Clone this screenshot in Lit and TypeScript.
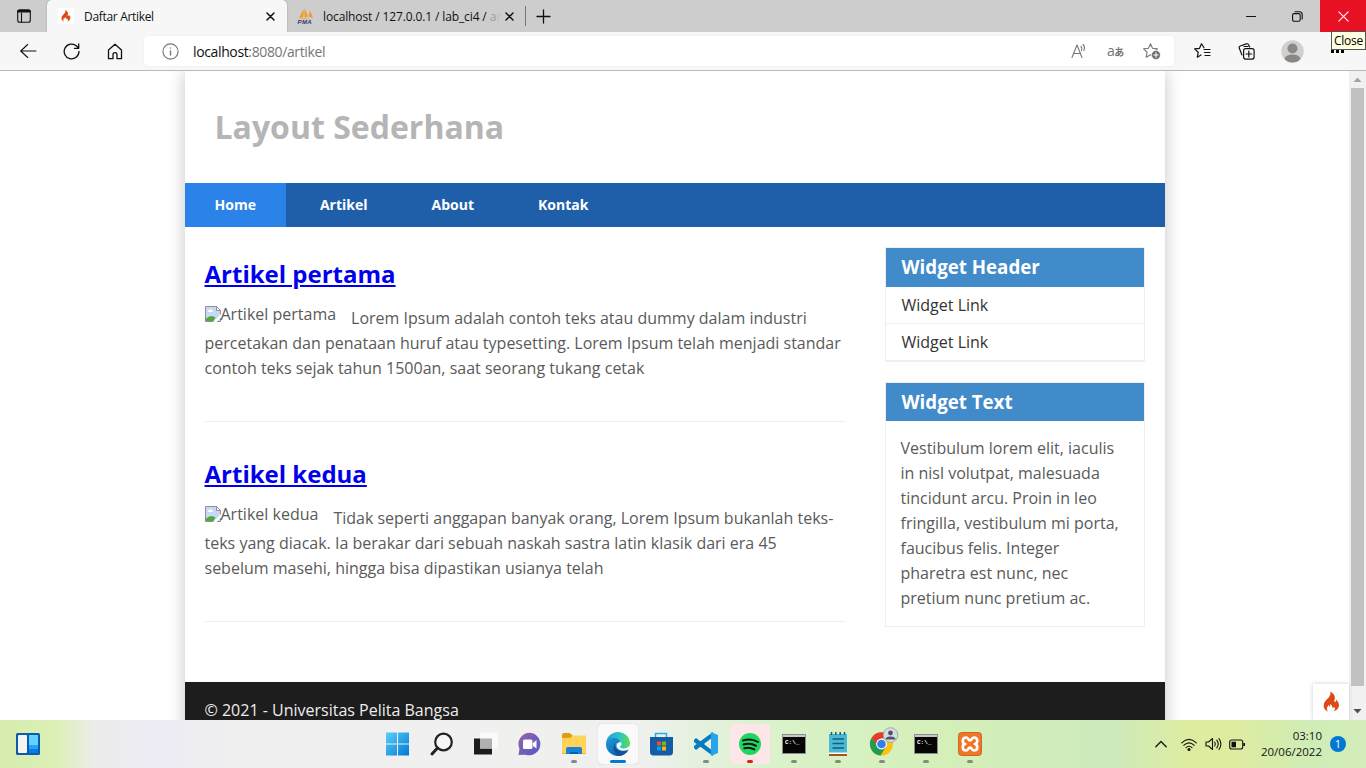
import { LitElement, html, css, svg } from "lit";
import { customElement } from "lit/decorators.js";

const flame = html`<svg viewBox="0 0 18 22" width="100%" height="100%"><path fill="#dd4814" d="M7.6 0c1 3-.3 4.900-2 6.800C3.500 9 .7 11.400.7 14.900c0 3 1.900 5.200 4.800 6.100-1.600-1.300-2-3.200-.9-4.800.4-.7 1.100-1.200 1.200-2.100.8.4 1.100 1.200.9 2.100.9-.5 1.200-2 .8-3.200 2.700 1.300 1.700 3.300 2.800 4 .7.400 1.400-.1 1.200-1.200 1.900 2 1.200 4.100-.6 5.200 3.300-.8 6-3.200 6-6.500 0-2.900-1.700-4.300-2.900-6.100-.4.9.2 1.900-.6 2.400-.8.400-1.500-.2-1.500-1.100 0-1.300 1.100-2.100.6-4.100C12 3 10 1.300 7.600 0Z"/></svg>`;

const ico = (w: number, h: number, body: unknown) =>
  html`<svg width=${w} height=${h} viewBox="0 0 ${w} ${h}" fill="none" stroke="currentColor" stroke-width="1.100" stroke-linecap="round" stroke-linejoin="round">${body}</svg>`;

const closeX = ico(9, 9, svg`<path stroke-width="1.500" d="M1 1l7 7M8 1L1 8"/>`);
const star = "M7.500 .8l2 4.500 4.900.600-3.600 3.400.900 4.900-4.200-2.500-4.300 2.500.900-4.900L.6 5.900l4.900-.6Z";

@customElement("browser-chrome")
class BrowserChrome extends LitElement {
  static styles = css`
    :host { display: block; height: 71px; font-family: "Open Sans", sans-serif; font-size: 12px; color: #111; }
    svg { display: block; flex: none; }
    .tabs { display: flex; height: 32px; background: #cdcdcd; }
    .menu { width: 47px; box-sizing: border-box; padding: 9px 0 0 17px; }
    .tab { display: flex; align-items: center; height: 32px; box-sizing: border-box; letter-spacing: -0.32px; white-space: nowrap; }
    .active { width: 240px; background: #f7f7f7; border-radius: 5px 5px 0 0; padding: 0 12px 0 11px; box-shadow: 0 0 2px #999; }
    .fav { width: 16px; height: 16px; box-sizing: border-box; background: #fff; padding: 2px 3px; margin-right: 10px; flex: none; }
    .label { flex: 1; }
    .second { width: 239px; padding: 0 12px 0 10px; }
    .second .label { letter-spacing: -0.12px; margin-left: 9px; }
    .fade { color: #a0a0a0; }
    .fade2 { color: #c0c0c0; }
    .divider { width: 1px; height: 20px; background: #777; margin-top: 6px; margin-left: -1px; }
    .plus { padding: 9px 0 0 10px; flex: 1; }
    .win { width: 46px; display: flex; align-items: center; justify-content: center; }
    .close { background: #e81123; color: #fff; }
    .bar { display: flex; align-items: center; height: 38px; background: #f7f7f7; border-bottom: 1px solid #b9b9b9; position: relative; }
    .navs { width: 144px; box-sizing: border-box; padding-left: 20px; display: flex; gap: 27px; align-items: center; }
    .navs svg:first-child { margin-right: -1px; }
    .address { width: 1030px; height: 30px; background: #fff; border-radius: 4px; display: flex; align-items: center; box-sizing: border-box; padding: 0 13px 0 18px; color: #767676; box-shadow: 0 0 2px #e8e8e8; }
    .url { flex: 1; margin-left: 14px; font-size: 14px; letter-spacing: -0.37px; }
    .host { color: #111; }
    .acts { display: flex; gap: 19px; align-items: center; }
    .aa { font-size: 14px; font-family: "Open Sans", "Noto Sans CJK JP", sans-serif; letter-spacing: -0.5px; width: 17px; line-height: 15px; white-space: nowrap; }
    .aa small { font-size: 10px; font-weight: bold; }
    .tools { display: flex; align-items: center; padding-left: 20px; }
    .gap1 { margin-left: 27px; }
    .gap2 { margin-left: 26px; }
    .gap3 { margin-left: 26px; }
    .tip { position: absolute; right: 0; top: -1px; width: 35px; height: 19px; box-sizing: border-box; border: 1px solid #555; background: #ffffe1; line-height: 18px; text-align: center; letter-spacing: -0.300px; color: #000; }
  `;
  render() {
    return html`
      <div class="tabs">
        <div class="menu">${ico(14, 14, svg`<rect x=".7" y=".7" width="12.600" height="12.600" rx="2"/><path stroke-width="2.600" d="M1.500 2.300h11"/><path d="M4.500 4v9"/>`)}</div>
        <div class="tab active"><span class="fav">${flame}</span><span class="label">Daftar Artikel</span>${closeX}</div>
        <div class="tab second">
          <svg width="17" height="16" viewBox="0 0 17 16"><path fill="#f79820" d="M6.500 1L2 10l4.500-1ZM7.500 0v9.500l3.500-1ZM13 2.500L11.500 8.500 16 10ZM1 10.800l6-.6 8.500 1Z"/><text x="0.500" y="15.500" font-family="Liberation Sans" font-size="6" font-weight="bold" font-style="italic" fill="#34346a" letter-spacing=".4">PMA</text></svg>
          <span class="label">localhost / 127.0.0.1 / lab_ci4 / <span class="fade">a</span><span class="fade2">r</span></span>${closeX}
        </div>
        <div class="divider"></div>
        <div class="plus">${ico(15, 15, svg`<path stroke-width="1.300" d="M7.500 1v13M1 7.500h13"/>`)}</div>
        <div class="win">${ico(11, 11, svg`<path d="M.5 5.500h9"/>`)}</div>
        <div class="win">${ico(11, 11, svg`<rect x=".6" y="2.600" width="7.600" height="7.600" rx="1.500"/><path d="M3 .7h4.500a2.700 2.700 0 0 1 2.700 2.700V8"/>`)}</div>
        <div class="win close">${ico(11, 11, svg`<path d="M.8.8l9.400 9.400M10.200.8L.8 10.200"/>`)}</div>
      </div>
      <div class="bar">
        <div class="navs">
          ${ico(17, 16, svg`<path d="M16 8H.7M7.700 1.500L.7 8l7 6.500"/>`)}
          ${ico(17, 17, svg`<path stroke-width="1.300" d="M16 8.500A7.400 7.400 0 1 1 13.600 3L15.500 5M15.700 1v4.300h-4.300"/>`)}
          ${ico(16, 17, svg`<path stroke-width="1.300" d="M1.500 7L8 1.300 14.500 7v8.700H10v-4a2 2 0 0 0-4 0v4H1.500Z"/>`)}
        </div>
        <div class="address">
          ${ico(17, 17, svg`<circle cx="8.500" cy="8.500" r="7.600"/><path stroke-width="1.400" d="M8.500 8v4M8.500 5v.1"/>`)}
          <span class="url"><span class="host">localhost</span>:8080/artikel</span>
          <div class="acts">
            ${ico(17, 16, svg`<path d="M1 14.500L6 2l5 12.500M2.700 10.500h6.700M10 3.500q1.500 1.500.5 4M12 1.500q2.500 2.500.8 6"/>`)}
            <span class="aa">a<small>あ</small></span>
            ${ico(18, 17, svg`<path d=${star}/><circle cx="13" cy="12" r="4.500" fill="#6a6a6a" stroke="#fff" stroke-width=".7"/><path stroke="#fff" d="M13 9.800v4.400M10.800 12h4.400"/>`)}
          </div>
        </div>
        <div class="tools">
          ${ico(17, 16, svg`<path stroke-width="1.200" d="M10 4.800L7.500.8l-2 4.500-4.900.6 3.600 3.400-.9 4.900L7 12M10 6.500h6M10.500 9.500H16M11 12.500h5"/>`)}
          <span class="gap1">${ico(17, 17, svg`<path stroke-width="1.200" d="M4 12L1.300 5.200Q.7 3.600 2.200 3L8.300.9q1.500-.5 2.200.8L11.700 4"/><path stroke-width="1.200" d="M6 3.500h4"/><rect x="5.600" y="5.600" width="10.500" height="10.500" rx="2" stroke-width="1.200" fill="#f7f7f7"/><path stroke-width="1.200" d="M10.800 8v6M8 11h5.700"/>`)}</span>
          <span class="gap2"><svg width="23" height="23" viewBox="0 0 23 23"><circle cx="11.500" cy="11.500" r="11.200" fill="#d2d0ce"/><circle cx="11.500" cy="8.500" r="5" fill="#8a8886"/><path d="M3.500 19q1-4.500 8-4.500t8 4.500q-3 3.600-8 3.600t-8-3.600Z" fill="#8a8886"/></svg></span>
          <span class="gap3"><svg width="15" height="3" viewBox="0 0 15 3"><path d="M1 0h3v3H1ZM6 0h3v3H6ZM11 0h3v3h-3Z"/></svg></span>
        </div>
        <div class="tip">Close</div>
      </div>`;
  }
}

@customElement("site-page")
class SitePage extends LitElement {
  static styles = css`
    :host { display: flex; height: 649px; overflow: hidden; background: #fff; font-family: "Open Sans", sans-serif; font-size: 16px; color: #5a5a5a; position: relative; }
    .view { width: 1349px; overflow: hidden; }
    .container { width: 980px; height: 700px; margin: 0 auto; box-shadow: 0 0 16px rgba(0, 0, 0, 0.23); }
    h1 { margin: 0; height: 112px; line-height: 111px; padding-left: 30px; font-size: 32px; font-weight: 700; color: #b5b5b5; box-sizing: border-box; }
    nav { display: flex; gap: 4px; background: #1f5faa; height: 44px; font-size: 14px; font-weight: 700; line-height: 44px; color: #fff; }
    nav span { padding: 0 30px; }
    nav .on { background: #2b83ea; }
    .body { display: flex; height: 455px; padding: 20px 20px 0; box-sizing: border-box; gap: 40px; }
    main { width: 640px; white-space: nowrap; }
    article { height: 200px; }
    h2 { margin: 0; height: 59px; line-height: 54px; font-size: 24px; font-weight: 700; color: #0000ee; text-decoration: underline; }
    .text { height: 115px; border-bottom: 1px solid #eee; line-height: 25px; }
    .alt { float: left; display: flex; line-height: 16px; margin-right: 15px; }
    aside { width: 260px; }
    .widget { border: 1px solid #eee; margin-bottom: 20px; }
    h3 { margin: 0; background: #428bca; color: #fff; font-size: 18.720px; font-weight: 700; height: 39px; line-height: 37px; padding-left: 16px; }
    .link { height: 36px; line-height: 36px; padding-left: 16px; border-bottom: 1px solid #eee; color: #333; }
    .w2 h3 { height: 38px; line-height: 38px; }
    .copy { padding: 15px; line-height: 25px; white-space: nowrap; }
    footer { background: #1d1d1d; color: #eee; height: 60px; padding: 16px 20px; line-height: 25px; }
    .scroll { width: 17px; background: #f1f1f1; display: flex; flex-direction: column; align-items: center; }
    .thumb { width: 13px; height: 598px; background: #c1c1c1; }
    .arrow { height: 17px; display: block; overflow: visible; }
    .debug { position: absolute; right: 17px; bottom: 0; width: 36px; height: 36px; box-sizing: border-box; padding: 7px 9px 7px 10px; background: #fff; box-shadow: 0 0 4px #ccc; }
  `;
  private broken = html`<svg width="16" height="16" viewBox="0 0 16 16"><path fill="#c6d9f7" stroke="#909090" d="M.5.500h11l4 4v11H.5Z"/><path fill="#fff" d="M2.500 6q0-2 2-2 1-1.500 2.500 0Q8 4 7.500 6ZM11.500 1v3.500H15Z"/><path fill="none" stroke="#909090" d="M11.500.5v4h4"/><path fill="#52a838" d="M1 15v-2.500q5-4.500 9.500-1l-2 3.500Z"/><path fill="#fff" d="M8 16l8-8v3.500L11.500 16Z"/></svg>`;
  private article(title: string, lines: string[]) {
    return html`<article><h2>${title}</h2><div class="text"><span class="alt">${this.broken}${title}</span>${lines.map((l, i) => (i ? html`<br />${l}` : l))}</div></article>`;
  }
  render() {
    const words = ["Vestibulum lorem elit, iaculis", "in nisl volutpat, malesuada", "tincidunt arcu. Proin in leo", "fringilla, vestibulum mi porta,", "faucibus felis. Integer", "pharetra est nunc, nec", "pretium nunc pretium ac."];
    return html`
      <div class="view"><div class="container">
        <h1>Layout Sederhana</h1>
        <nav><span class="on">Home</span><span>Artikel</span><span>About</span><span>Kontak</span></nav>
        <div class="body">
          <main>
            ${this.article("Artikel pertama", ["Lorem Ipsum adalah contoh teks atau dummy dalam industri", "percetakan dan penataan huruf atau typesetting. Lorem Ipsum telah menjadi standar", "contoh teks sejak tahun 1500an, saat seorang tukang cetak"])}
            ${this.article("Artikel kedua", ["Tidak seperti anggapan banyak orang, Lorem Ipsum bukanlah teks-", "teks yang diacak. Ia berakar dari sebuah naskah sastra latin klasik dari era 45", "sebelum masehi, hingga bisa dipastikan usianya telah"])}
          </main>
          <aside>
            <div class="widget"><h3>Widget Header</h3><div class="link">Widget Link</div><div class="link">Widget Link</div></div>
            <div class="widget w2"><h3>Widget Text</h3><div class="copy">${words.map((w) => html`${w}<br />`)}</div></div>
          </aside>
        </div>
        <footer>© 2021 - Universitas Pelita Bangsa</footer>
      </div></div>
      <div class="scroll">
        <svg class="arrow" width="17" height="17"><path fill="#a3a3a3" d="M4.500 11h8l-4-4.500Z"/></svg>
        <div class="thumb"></div>
        <svg class="arrow" width="17" height="34"><path fill="#505050" d="M4.500 23h8l-4 4.500Z"/></svg>
      </div>
      <div class="debug">${flame}</div>`;
  }
}

const term = svg`<rect x=".5" y="2.500" width="23" height="19" fill="#050505" stroke="#8b8b8b"/><path fill="#c8c8c8" d="M1 3h22v2H1Z"/><text x="3" y="11.500" font-family="Liberation Mono" font-weight="bold" font-size="6" fill="#fff">C:\\_</text>`;

const apps: { body: unknown; mark?: string }[] = [
  { body: svg`<defs><linearGradient id="wi" x2="1" y2="1"><stop stop-color="#5bd0fa"/><stop offset="1" stop-color="#0078d4"/></linearGradient></defs><path fill="url(#wi)" d="M0 .500H11V11.500H0ZM12 .500h11v11h-11ZM0 12.500h11v11H0ZM12 12.500h11v11h-11Z"/>` },
  { body: svg`<circle cx="13.500" cy="10" r="8.300" fill="#f6f6f6" stroke="#222" stroke-width="2.200"/><path d="M7.500 16L2 22" stroke="#222" stroke-width="3" stroke-linecap="round"/>` },
  { body: svg`<path d="M0 6.500h18v16H0Z" fill="#1c1c1c"/><path d="M6 .5h18v16H6Z" fill="#fafafa"/><path d="M6 6.500h12v10H6Z" fill="#b0b0b0"/>` },
  { body: svg`<defs><linearGradient id="ch" x2="1" y2="1"><stop stop-color="#9864a8"/><stop offset="1" stop-color="#5059c9"/></linearGradient></defs><path fill="url(#ch)" d="M12 .7a11.300 11.300 0 1 1-4.500 22L.5 23l1-6A11.400 11.400 0 0 1 12 .7Z"/><rect x="5" y="7.500" width="9.500" height="9.500" rx="1.500" fill="#fff"/><path fill="#fff" d="M15 11l3.500-3v8.500L15 14Z"/>` },
  { mark: "dot", body: svg`<path fill="#dca010" d="M0 3q0-2 2-2h6l3 3-3 3H0Z"/><path fill="#ffd35a" d="M0 6h8l3-2.500h13V22H0Z"/><path fill="#1683d8" d="M4 22v-5q0-2 2-2h12q2 0 2 2v5Z"/><path fill="#0861ab" d="M8 22v-2h8v2Z"/><path fill="#f3b82d" d="M0 21h4v1H0ZM20 21h4v1H20Z"/>` },
  { mark: "current", body: svg`<defs><linearGradient id="e1"><stop stop-color="#219fd6"/><stop offset=".55" stop-color="#2cc4c7"/><stop offset="1" stop-color="#5ddd4d"/></linearGradient><linearGradient id="e2" x2="1" y2="1"><stop stop-color="#1c9de0"/><stop offset="1" stop-color="#104da0"/></linearGradient></defs><circle cx="12" cy="12" r="12" fill="url(#e1)"/><path fill="url(#e2)" d="M0 13C.5 7 5 5.500 9 6q5 .5 5 5c-4-1-5 1-5 3 0 3 4 5.500 8 5q4-1 6-2.500A12 12 0 0 1 0 13Z"/><path fill="#12529e" d="M10 11c-4 3-3 9 2 13q7.500.2 11-7.500-4 3-8.500 2C10 17.500 8.500 14 10 11Z"/><path fill="#f5faff" d="M14.500 10c3 3-1 4-.5 5 1 2.500 8 1.500 9.500-1.500l.5 1-1 3q-4.500 2-8.500.8C10 17 9 10.500 14.500 10Z"/>` },
  { body: svg`<path d="M5.500 6V1.500h11V6" fill="none" stroke="#29aee9" stroke-width="1.600"/><path fill="#155ba5" d="M0 5h23v15q0 3.500-3.500 3.500H3.500Q0 23.500 0 20Z"/><path fill="#f25022" d="M7 9.500h4v4H7Z"/><path fill="#7fba00" d="M12 9.500h4v4h-4Z"/><path fill="#00a4ef" d="M7 14.500h4v4H7Z"/><path fill="#ffb900" d="M12 14.500h4v4h-4Z"/>` },
  { mark: "dot", body: svg`<path fill="#0879be" d="M0 8l2-2 17 13v5L0 10Z"/><path fill="#087bc1" d="M0 16l2 2L19 5V0L0 14Z"/><path fill="#26a4ed" d="M17 0l7 3v18l-7 3Z"/>` },
  { mark: "spotify", body: svg`<circle cx="12" cy="12" r="11" fill="#1ed760"/><path d="M5 8.500q8-2.500 15 1.500M5.500 12.500q7-2 12.500 1.300M6.300 16.200q5.500-1.500 10 1.200" fill="none" stroke="#111" stroke-width="2" stroke-linecap="round"/>` },
  { mark: "dot", body: term },
  { mark: "dot", body: svg`<path fill="#4ab8d6" d="M3 2h18v20H3Z"/><path stroke="#155d7a" stroke-width="1.500" d="M5.500 0v3M9.800 0v3M14.200 0v3M18.500 0v3M6.500 7h11.500M6.500 11.500h11.500M6.500 16h11.500"/><path fill="#fff" d="M3 20.500h18v1.500H3Z"/><path fill="#a6521c" d="M3 22h18v2H3Z"/>` },
  { mark: "dot", body: svg`<circle cx="11.500" cy="12" r="11.500" fill="#fbc116"/><path fill="#e33b2e" d="M1.500 6A11.500 11.500 0 0 1 21.500 6H11.500L7 14Z"/><path fill="#229c50" d="M1.500 6A11.500 11.500 0 0 0 10.500 23.500L16 14.500l-8-.5Z"/><circle cx="11.500" cy="12" r="5.400" fill="#fff"/><circle cx="11.500" cy="12" r="4.300" fill="#2f80ed"/><circle cx="20.500" cy="3" r="7.300" fill="#dadce3" stroke="#8d919a" stroke-width=".7"/><circle cx="20.500" cy="1" r="2.400" fill="#4b5568"/><path fill="#4b5568" d="M15.500 7.500q0-3 5-3t5 3Z"/>` },
  { mark: "dot", body: term },
  { mark: "dot", body: svg`<rect x=".5" y=".5" width="23" height="23" rx="3" fill="#ee7625" stroke="#c96a28"/><path d="M8 5.500c-4 0-4 5-1.500 6.500-2.500 1.500-2.500 6.500 1.500 6.500 2.500 0 2-3 4-3s1.500 3 4 3c4 0 4-5 1.500-6.500C20 10.500 20 5.500 16 5.500c-2.500 0-2 3-4 3s-1.500-3-4-3Z" fill="none" stroke="#fff" stroke-width="2.700"/>` },
];

@customElement("task-bar")
class TaskBar extends LitElement {
  static styles = css`
    :host { display: flex; height: 48px; font-family: "Open Sans", sans-serif; color: #151515; background: linear-gradient(90deg, #d6ecae 0, #dcf0b6 55px, #ececea 95px, #ecebf6 155px, #efefef 230px, #f0f1ef 640px, #e4f1dd 700px, #d8f2c6 800px, #d5efb9 950px, #cdeabd 1110px, #deec9f 1190px, #deec9f 1230px, #d0ecb5 1310px, #d4edbb 1366px); }
    svg { display: block; overflow: visible; flex: none; }
    .start { width: 376px; padding: 12px 0 0 16px; box-sizing: border-box; }
    .apps { display: flex; width: 616px; }
    .slot { width: 40px; height: 40px; margin: 4px 2px; border-radius: 4px; box-sizing: border-box; padding-top: 8px; display: flex; flex-direction: column; align-items: center; }
    .slot::after { content: ""; width: 6px; height: 3px; border-radius: 2px; margin-top: 4px; }
    .dot::after { background: #858b82; }
    .current { background: #fafafa; box-shadow: 0 0 1px #aaa; }
    .current::after { width: 16px; background: #0078d4; }
    .spotify { background: #fde6e7; }
    .spotify::after { background: #c42b1c; }
    .tray { flex: 1; display: flex; align-items: center; padding-left: 163px; }
    .wifi { margin-left: 14px; }
    .vol { margin-left: 8px; }
    .bat { margin-left: 7px; }
    .clock { width: 77px; text-align: right; font-size: 11.500px; line-height: 16px; letter-spacing: 0; white-space: nowrap; }
    .badge { margin-left: 8px; width: 16px; height: 16px; border-radius: 50%; background: #0078d4; color: #fff; font-size: 11px; line-height: 16px; text-align: center; }
  `;
  render() {
    return html`
      <div class="start"><svg width="24" height="24" viewBox="0 0 24 24"><rect y="1" width="24" height="22" rx="1.500" fill="#0c5bad"/><rect x="2" y="3" width="9" height="18" rx="1" fill="#f4f4f4"/><path fill="#62d2ff" d="M13 3h9v10h-9Z"/><path fill="#22a3f5" d="M13 13h9v4h-9Z"/><path fill="#087ce0" d="M13 17h9v4h-9Z"/></svg></div>
      <div class="apps">${apps.map((a) => html`<div class="slot ${a.mark ?? ""}"><svg width="24" height="24" viewBox="0 0 24 24">${a.body}</svg></div>`)}</div>
      <div class="tray">
        ${ico(12, 8, svg`<path stroke-width="1.300" d="M.8 6.800L6 1.500l5.200 5.300"/>`)}
        <span class="wifi">${ico(16, 13, svg`<path d="M.7 4.800q7.300-7 14.600 0M2.800 7.300q5.200-5 10.400 0M5 9.700q3-3 6 0"/><circle cx="8" cy="11.500" r="1" fill="#111"/>`)}</span>
        <span class="vol">${ico(17, 14, svg`<path d="M1 5h2.500L7.500 1.500v11L3.500 9H1ZM9.700 5q1.300 2 0 4M11.800 3.200q2.800 3.800 0 7.600M14 1.500q3.800 5.500 0 11"/>`)}</span>
        <span class="bat">${ico(16, 11, svg`<rect x=".7" y="1" width="13" height="9" rx="2"/><path fill="#111" stroke="none" d="M2.500 2.800h4.500v5.400H2.500ZM14.300 4h1.700v3h-1.700Z"/>`)}</span>
        <div class="clock">03:10<br />20/06/2022</div>
        <div class="badge">1</div>
      </div>`;
  }
}

@customElement("app-root")
class AppRoot extends LitElement {
  static styles = css`
    :host { display: flex; flex-direction: column; width: 1366px; height: 768px; overflow: hidden; }
  `;
  render() {
    return html`<browser-chrome></browser-chrome><site-page></site-page><task-bar></task-bar>`;
  }
}
